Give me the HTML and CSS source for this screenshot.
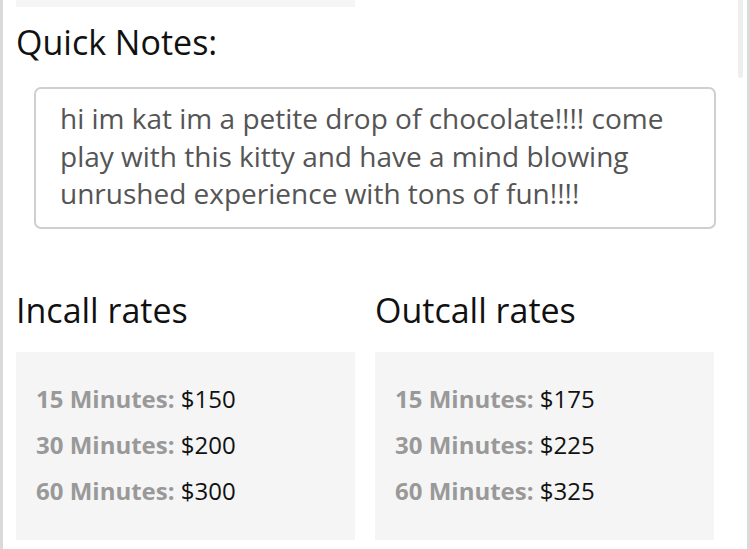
FILE: index.html
```html
<!DOCTYPE html>
<html>
<head>
<meta charset="utf-8">
<link rel="stylesheet" href="styles.css">
</head>
<body>
<div class="page">
  <div class="scroll-indicator"></div>
  <div class="prev-box"></div>
  <h2 class="section-title">Quick Notes:</h2>
  <div class="notes">hi im kat im a petite drop of chocolate!!!! come play with this kitty and have a mind blowing unrushed experience with tons of fun!!!!</div>
  <div class="rates">
    <div class="rate-col">
      <h2 class="rate-title">Incall rates</h2>
      <div class="rate-box">
        <div class="rate-row"><span class="label">15 Minutes:</span> $150</div>
        <div class="rate-row"><span class="label">30 Minutes:</span> $200</div>
        <div class="rate-row"><span class="label">60 Minutes:</span> $300</div>
      </div>
    </div>
    <div class="rate-col">
      <h2 class="rate-title">Outcall rates</h2>
      <div class="rate-box">
        <div class="rate-row"><span class="label">15 Minutes:</span> $175</div>
        <div class="rate-row"><span class="label">30 Minutes:</span> $225</div>
        <div class="rate-row"><span class="label">60 Minutes:</span> $325</div>
      </div>
    </div>
  </div>
</div>
</body>
</html>
```
FILE: styles.css
```css
html, body {
  margin: 0;
  padding: 0;
  background: #fff;
}
body {
  font-family: "Open Sans", "Liberation Sans", sans-serif;
  color: #111;
}
.page {
  position: relative;
  width: 750px;
  height: 549px;
  box-sizing: border-box;
  border-left: 3px solid #dadada;
  border-right: 3px solid #dadada;
  padding-left: 13px;
  overflow: hidden;
}
.scroll-indicator {
  position: absolute;
  top: 0;
  left: 735px;
  width: 5px;
  height: 78px;
  background: #eeeeee;
  border-radius: 0 0 3px 3px;
}
.prev-box {
  width: 339px;
  height: 7px;
  background: #f5f5f5;
}
.section-title,
.rate-title {
  margin: 0;
  font-size: 34px;
  font-weight: 400;
  color: #111;
}
.section-title {
  margin-top: 12px;
}
.notes {
  margin-top: 22px;
  margin-left: 18px;
  width: 682px;
  box-sizing: border-box;
  border: 2px solid #cfcfcf;
  border-radius: 7px;
  padding: 11px 24px 14px;
  font-size: 28px;
  line-height: 37.5px;
  color: #555;
}
.rates {
  display: flex;
  gap: 20px;
  margin-top: 58px;
}
.rate-col {
  width: 339px;
}
.rate-title {
  margin-bottom: 19px;
}
.rate-box {
  background: #f5f5f5;
  padding: 24px 20px 26px;
}
.rate-row {
  font-size: 24px;
  line-height: 46px;
  color: #111;
}
.label {
  font-weight: 700;
  color: #999;
}
```
